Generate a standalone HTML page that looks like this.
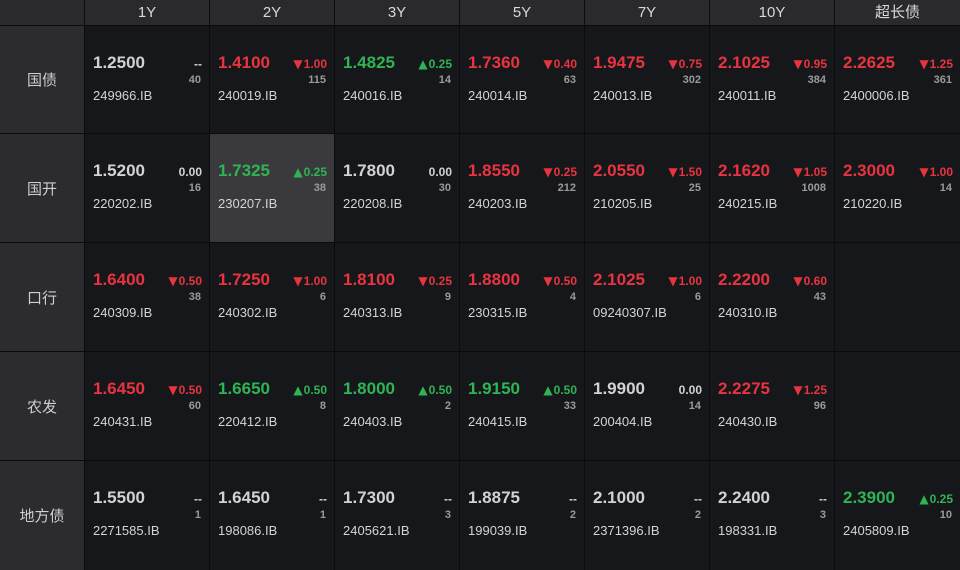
<!DOCTYPE html>
<html><head><meta charset="utf-8"><style>
*{margin:0;padding:0;box-sizing:border-box}
body{width:960px;height:570px;background:#0b0b0d;position:relative;overflow:hidden;font-family:"Liberation Sans","Noto Sans CJK SC",sans-serif}
.h{position:absolute;top:0;height:25px;background:#2a2a2e;color:#d8d8d8;font-size:15px;line-height:26px;text-align:center}
.l{position:absolute;left:0;width:84px;background:#2b2b30;color:#cfcfcf;font-size:15px;display:flex;align-items:center;justify-content:center}
.c{position:absolute;width:124px;background:#16171b}
.c.hl{background:#3a3a3e}
.p{position:absolute;left:8px;top:27px;font-size:17px;font-weight:bold;line-height:20px}
.d{position:absolute;right:7px;top:31px;font-size:12px;font-weight:bold;line-height:14px}
.d i{font-style:normal;font-family:"DejaVu Sans",sans-serif;font-size:12px;margin-right:1px}
.n{position:absolute;right:8px;top:48px;font-size:11px;font-weight:bold;color:#9a9a9a;line-height:13px}
.k{position:absolute;left:8px;top:62px;font-size:13px;color:#d4d4d4;line-height:16px}
.r{color:#e8343f}.g{color:#2fb454}.w{color:#d2d2d2}
</style></head><body>
<div class="h" style="left:0;width:84px"></div>
<div class="h" style="left:85px;width:124px">1Y</div>
<div class="h" style="left:210px;width:124px">2Y</div>
<div class="h" style="left:335px;width:124px">3Y</div>
<div class="h" style="left:460px;width:124px">5Y</div>
<div class="h" style="left:585px;width:124px">7Y</div>
<div class="h" style="left:710px;width:124px">10Y</div>
<div class="h" style="left:835px;width:125px">超长债</div>

<div class="l" style="top:26px;height:107px">国债</div>
<div class="l" style="top:134px;height:108px">国开</div>
<div class="l" style="top:243px;height:108px">口行</div>
<div class="l" style="top:352px;height:108px">农发</div>
<div class="l" style="top:461px;height:109px">地方债</div>

<div class="c" style="left:85px;top:26px;height:107px"><span class="p w">1.2500</span><span class="d w">--</span><span class="n">40</span><span class="k">249966.IB</span></div>
<div class="c" style="left:210px;top:26px;height:107px"><span class="p r">1.4100</span><span class="d r"><i>▼</i>1.00</span><span class="n">115</span><span class="k">240019.IB</span></div>
<div class="c" style="left:335px;top:26px;height:107px"><span class="p g">1.4825</span><span class="d g"><i>▲</i>0.25</span><span class="n">14</span><span class="k">240016.IB</span></div>
<div class="c" style="left:460px;top:26px;height:107px"><span class="p r">1.7360</span><span class="d r"><i>▼</i>0.40</span><span class="n">63</span><span class="k">240014.IB</span></div>
<div class="c" style="left:585px;top:26px;height:107px"><span class="p r">1.9475</span><span class="d r"><i>▼</i>0.75</span><span class="n">302</span><span class="k">240013.IB</span></div>
<div class="c" style="left:710px;top:26px;height:107px"><span class="p r">2.1025</span><span class="d r"><i>▼</i>0.95</span><span class="n">384</span><span class="k">240011.IB</span></div>
<div class="c" style="left:835px;top:26px;height:107px;width:125px"><span class="p r">2.2625</span><span class="d r"><i>▼</i>1.25</span><span class="n">361</span><span class="k">2400006.IB</span></div>

<div class="c" style="left:85px;top:134px;height:108px"><span class="p w">1.5200</span><span class="d w">0.00</span><span class="n">16</span><span class="k">220202.IB</span></div>
<div class="c hl" style="left:210px;top:134px;height:108px"><span class="p g">1.7325</span><span class="d g"><i>▲</i>0.25</span><span class="n">38</span><span class="k">230207.IB</span></div>
<div class="c" style="left:335px;top:134px;height:108px"><span class="p w">1.7800</span><span class="d w">0.00</span><span class="n">30</span><span class="k">220208.IB</span></div>
<div class="c" style="left:460px;top:134px;height:108px"><span class="p r">1.8550</span><span class="d r"><i>▼</i>0.25</span><span class="n">212</span><span class="k">240203.IB</span></div>
<div class="c" style="left:585px;top:134px;height:108px"><span class="p r">2.0550</span><span class="d r"><i>▼</i>1.50</span><span class="n">25</span><span class="k">210205.IB</span></div>
<div class="c" style="left:710px;top:134px;height:108px"><span class="p r">2.1620</span><span class="d r"><i>▼</i>1.05</span><span class="n">1008</span><span class="k">240215.IB</span></div>
<div class="c" style="left:835px;top:134px;height:108px;width:125px"><span class="p r">2.3000</span><span class="d r"><i>▼</i>1.00</span><span class="n">14</span><span class="k">210220.IB</span></div>

<div class="c" style="left:85px;top:243px;height:108px"><span class="p r">1.6400</span><span class="d r"><i>▼</i>0.50</span><span class="n">38</span><span class="k">240309.IB</span></div>
<div class="c" style="left:210px;top:243px;height:108px"><span class="p r">1.7250</span><span class="d r"><i>▼</i>1.00</span><span class="n">6</span><span class="k">240302.IB</span></div>
<div class="c" style="left:335px;top:243px;height:108px"><span class="p r">1.8100</span><span class="d r"><i>▼</i>0.25</span><span class="n">9</span><span class="k">240313.IB</span></div>
<div class="c" style="left:460px;top:243px;height:108px"><span class="p r">1.8800</span><span class="d r"><i>▼</i>0.50</span><span class="n">4</span><span class="k">230315.IB</span></div>
<div class="c" style="left:585px;top:243px;height:108px"><span class="p r">2.1025</span><span class="d r"><i>▼</i>1.00</span><span class="n">6</span><span class="k">09240307.IB</span></div>
<div class="c" style="left:710px;top:243px;height:108px"><span class="p r">2.2200</span><span class="d r"><i>▼</i>0.60</span><span class="n">43</span><span class="k">240310.IB</span></div>
<div class="c" style="left:835px;top:243px;height:108px;width:125px"></div>

<div class="c" style="left:85px;top:352px;height:108px"><span class="p r">1.6450</span><span class="d r"><i>▼</i>0.50</span><span class="n">60</span><span class="k">240431.IB</span></div>
<div class="c" style="left:210px;top:352px;height:108px"><span class="p g">1.6650</span><span class="d g"><i>▲</i>0.50</span><span class="n">8</span><span class="k">220412.IB</span></div>
<div class="c" style="left:335px;top:352px;height:108px"><span class="p g">1.8000</span><span class="d g"><i>▲</i>0.50</span><span class="n">2</span><span class="k">240403.IB</span></div>
<div class="c" style="left:460px;top:352px;height:108px"><span class="p g">1.9150</span><span class="d g"><i>▲</i>0.50</span><span class="n">33</span><span class="k">240415.IB</span></div>
<div class="c" style="left:585px;top:352px;height:108px"><span class="p w">1.9900</span><span class="d w">0.00</span><span class="n">14</span><span class="k">200404.IB</span></div>
<div class="c" style="left:710px;top:352px;height:108px"><span class="p r">2.2275</span><span class="d r"><i>▼</i>1.25</span><span class="n">96</span><span class="k">240430.IB</span></div>
<div class="c" style="left:835px;top:352px;height:108px;width:125px"></div>

<div class="c" style="left:85px;top:461px;height:109px"><span class="p w">1.5500</span><span class="d w">--</span><span class="n">1</span><span class="k">2271585.IB</span></div>
<div class="c" style="left:210px;top:461px;height:109px"><span class="p w">1.6450</span><span class="d w">--</span><span class="n">1</span><span class="k">198086.IB</span></div>
<div class="c" style="left:335px;top:461px;height:109px"><span class="p w">1.7300</span><span class="d w">--</span><span class="n">3</span><span class="k">2405621.IB</span></div>
<div class="c" style="left:460px;top:461px;height:109px"><span class="p w">1.8875</span><span class="d w">--</span><span class="n">2</span><span class="k">199039.IB</span></div>
<div class="c" style="left:585px;top:461px;height:109px"><span class="p w">2.1000</span><span class="d w">--</span><span class="n">2</span><span class="k">2371396.IB</span></div>
<div class="c" style="left:710px;top:461px;height:109px"><span class="p w">2.2400</span><span class="d w">--</span><span class="n">3</span><span class="k">198331.IB</span></div>
<div class="c" style="left:835px;top:461px;height:109px;width:125px"><span class="p g">2.3900</span><span class="d g"><i>▲</i>0.25</span><span class="n">10</span><span class="k">2405809.IB</span></div>
</body></html>
